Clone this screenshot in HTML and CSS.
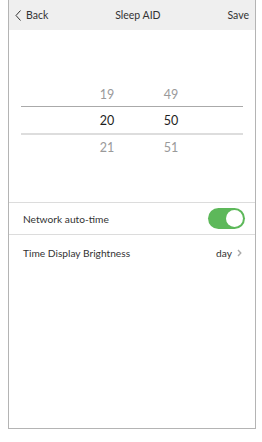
FILE: index.html
```html
<!DOCTYPE html>
<html>
<head>
<meta charset="utf-8">
<link rel="stylesheet" href="styles.css">
</head>
<body>
<div class="frame">
  <div class="header">
    <div class="back">
      <svg class="back-icon" width="7" height="11" viewBox="0 0 7 11"><polyline points="5.5,0.5 1,5.5 5.5,10.5" fill="none" stroke="#333" stroke-width="1"/></svg>
      <span>Back</span>
    </div>
    <div class="title">Sleep AID</div>
    <div class="save">Save</div>
  </div>
  <div class="picker">
    <div class="prow faded"><span class="cell">19</span><span class="cell">49</span></div>
    <div class="prow active"><span class="cell">20</span><span class="cell">50</span></div>
    <div class="prow faded"><span class="cell">21</span><span class="cell">51</span></div>
  </div>
  <div class="settings">
    <div class="srow first">
      <span class="label">Network auto-time</span>
      <span class="toggle"><span class="knob"></span></span>
    </div>
    <div class="srow second">
      <span class="label">Time Display Brightness</span>
      <span class="value">day
        <svg class="chev" width="5" height="8" viewBox="0 0 5 8"><polyline points="1,1 3.8,4 1,7" fill="none" stroke="#aaa" stroke-width="1.4"/></svg>
      </span>
    </div>
  </div>
</div>
</body>
</html>
```
FILE: styles.css
```css
* { box-sizing: border-box; }
body {
  margin: 0;
  background: #fff;
  font-family: "Lato", "Noto Sans", sans-serif;
  color: #333;
}
.frame {
  margin-left: 8px;
  width: 248px;
  height: 429px;
  border: 1px solid #b4b4b4;
  border-top: none;
  display: flex;
  flex-direction: column;
}
.header {
  height: 30px;
  background: #efefef;
  display: flex;
  align-items: center;
  justify-content: space-between;
  padding: 0 6px 0 6px;
  font-size: 10.5px;
  color: #333;
}
.back {
  display: flex;
  align-items: center;
  gap: 4px;
}
.back-icon { display: block; }
.picker {
  margin: 52px 12px 0 12px;
  height: 120px;
}
.prow {
  display: flex;
  padding-left: 66px;
  gap: 24px;
  font-size: 12.5px;
  align-items: center;
}
.cell {
  width: 40px;
  text-align: center;
}
.prow.faded { color: #9a9a9a; height: 24px; }
.prow.active {
  color: #1e1e1e;
  height: 29px;
  border-top: 1px solid #aaaaaa;
  border-bottom: 2px solid #dddddd;
}
.settings {
  border-top: 1px solid #dcdcdc;
}
.srow {
  display: flex;
  align-items: center;
  justify-content: space-between;
  padding: 0 10px 0 14px;
  font-size: 10.2px;
  color: #333;
}
.srow.first {
  height: 32px;
  border-bottom: 1px solid #dcdcdc;
}
.srow.second {
  height: 35px;
  padding-right: 13px;
}
.toggle {
  width: 37px;
  height: 21px;
  border-radius: 11px;
  background: #5db85a;
  display: flex;
  align-items: center;
  justify-content: flex-end;
  padding-right: 2px;
}
.knob {
  width: 17px;
  height: 17px;
  border-radius: 50%;
  background: #fff;
}
.value {
  display: flex;
  align-items: center;
  gap: 5px;
}
.chev { display: block; }
```
